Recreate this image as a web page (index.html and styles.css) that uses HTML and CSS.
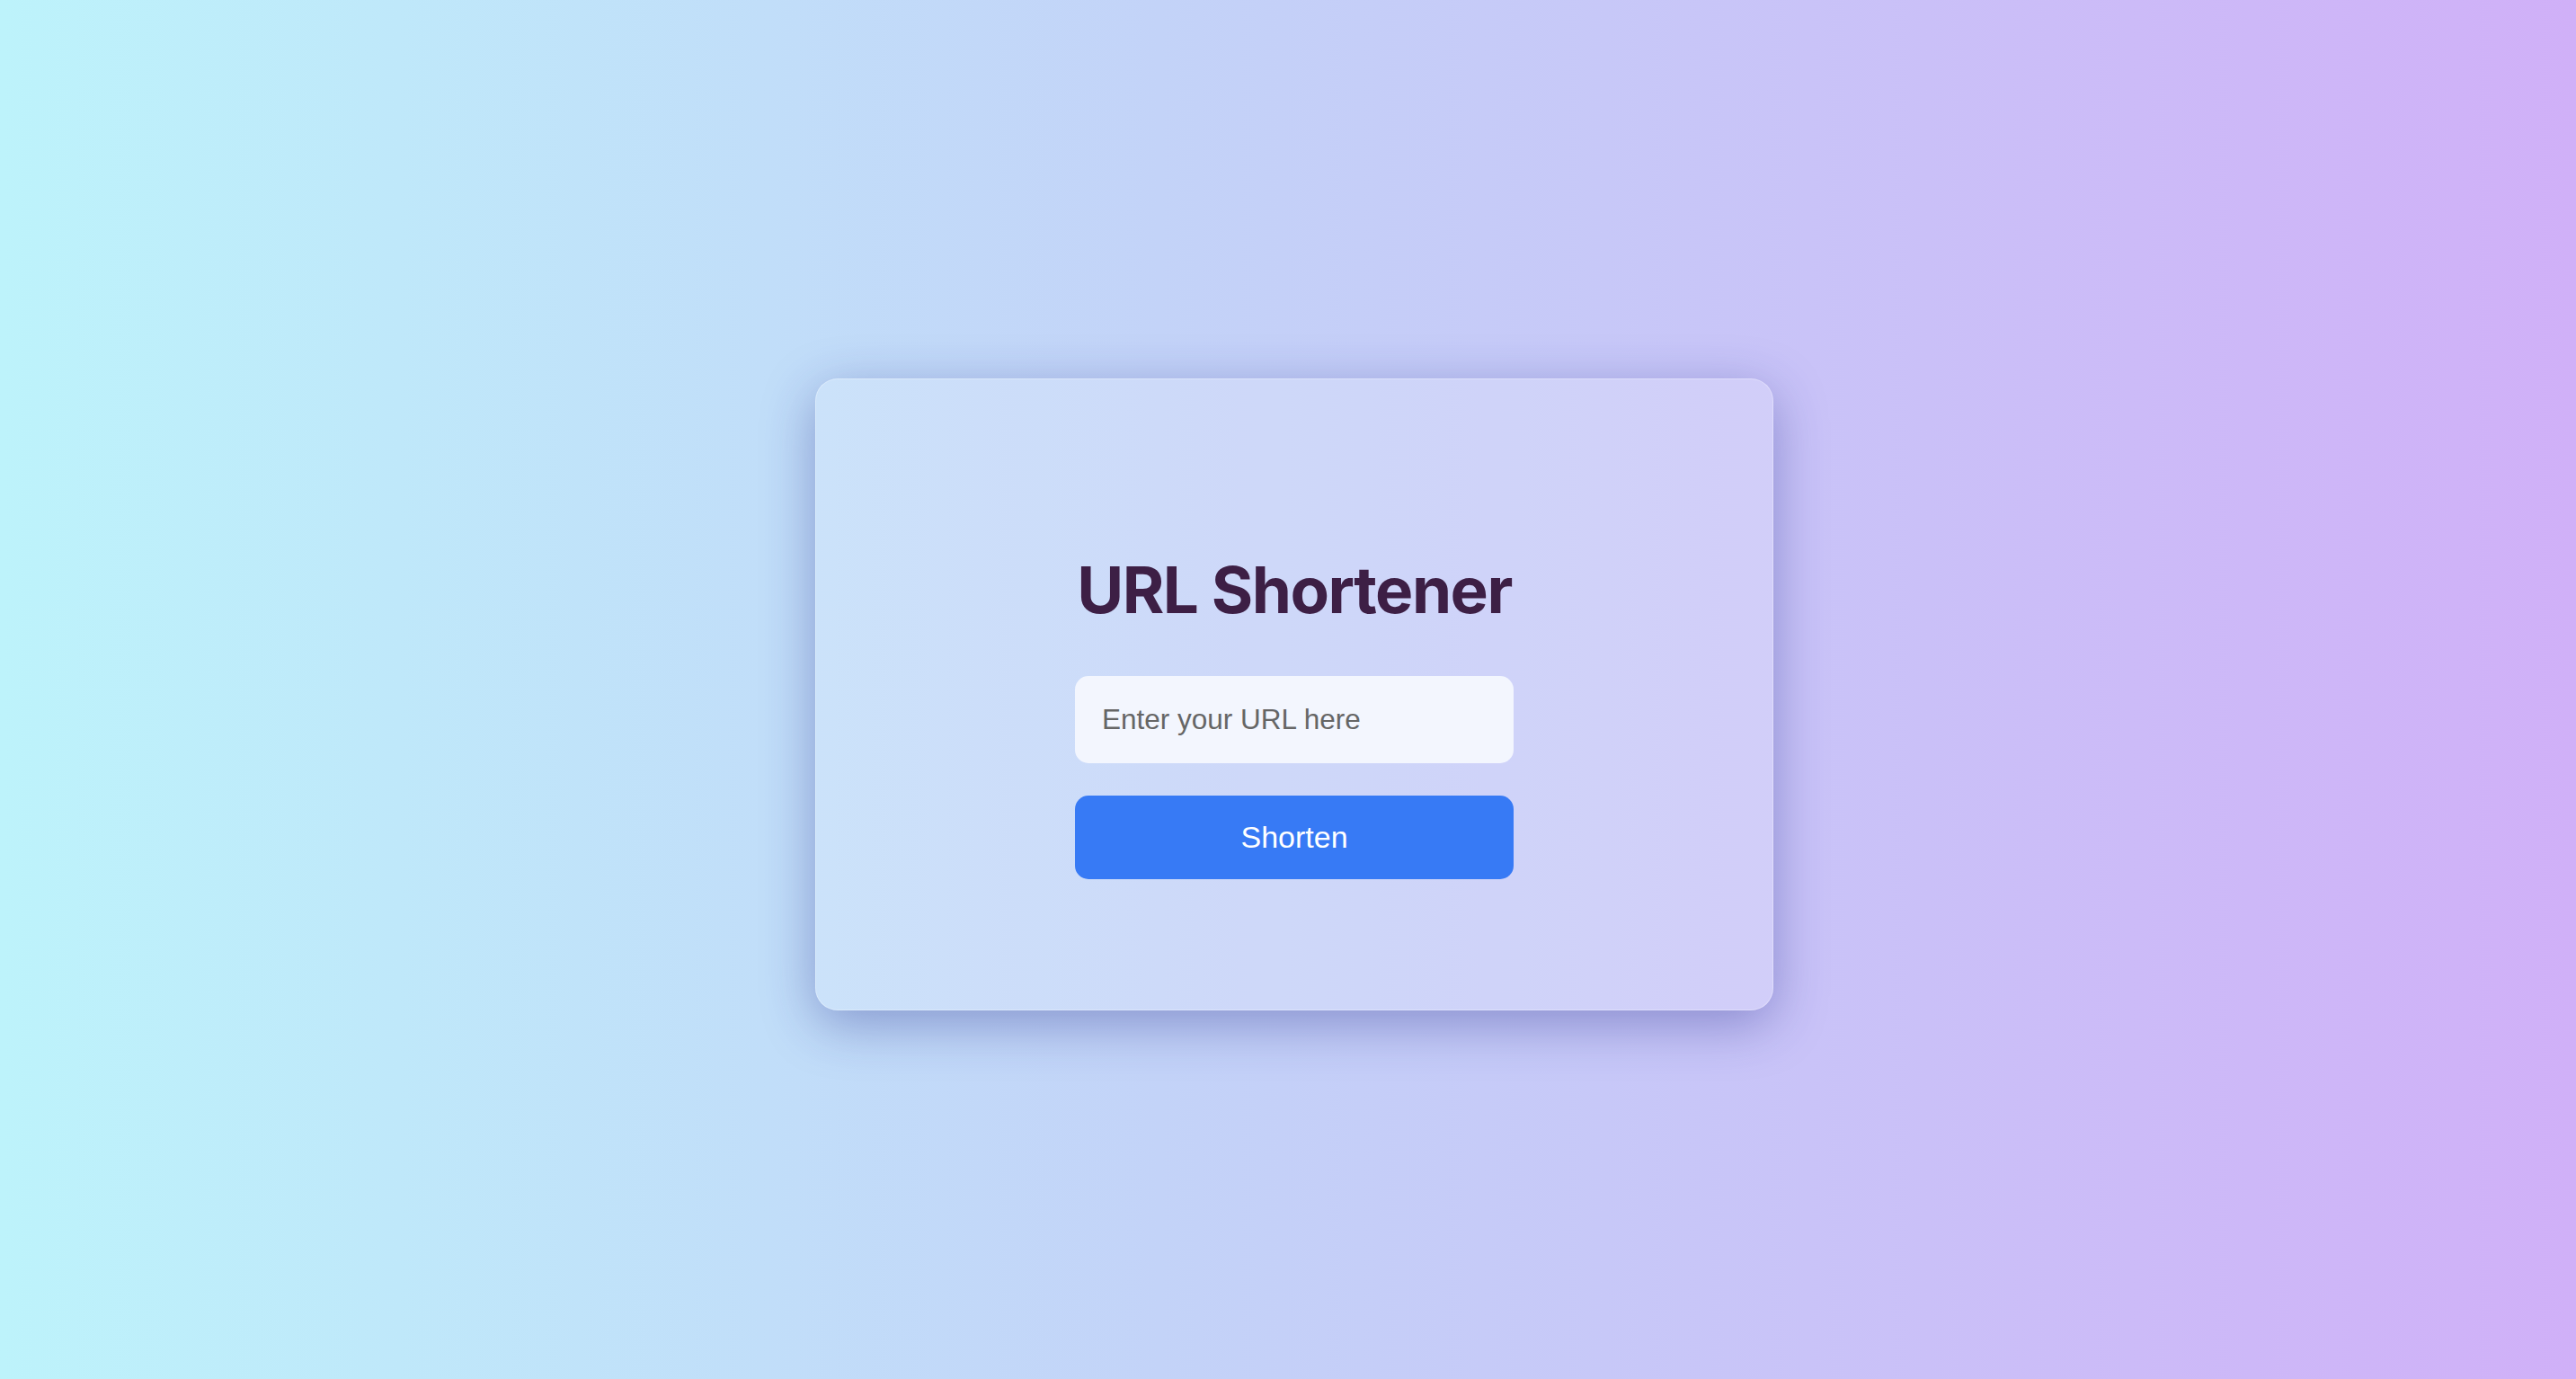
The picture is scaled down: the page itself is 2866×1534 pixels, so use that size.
FILE: index.html
```html
<!DOCTYPE html>
<html lang="en">
<head>
<meta charset="utf-8">
<title>URL Shortener</title>
<link rel="stylesheet" href="styles.css">
</head>
<body>
<main class="page">
  <section class="card">
    <h1 class="title">URL Shortener</h1>
    <input class="url-input" type="text" placeholder="Enter your URL here">
    <button class="btn" type="button">Shorten</button>
  </section>
</main>
</body>
</html>
```
FILE: styles.css
```css
html, body {
  margin: 0;
  padding: 0;
  height: 100%;
}
body {
  background: linear-gradient(to right, #bdf3fb 0%, #c3d3f8 45%, #d0b0f8 100%);
  font-family: "Liberation Sans", Arial, sans-serif;
}
.page {
  min-height: 100vh;
  box-sizing: border-box;
  display: flex;
  align-items: center;
  justify-content: center;
  padding-left: 14px;
  padding-top: 10px;
}
.card {
  width: 1066px;
  height: 703px;
  box-sizing: border-box;
  padding-top: 191px;
  display: flex;
  flex-direction: column;
  align-items: center;
  background: rgba(255, 255, 255, 0.17);
  border: 1px solid rgba(255, 255, 255, 0.3);
  border-radius: 25px;
  box-shadow: 0 15px 58px rgba(31, 38, 135, 0.37);
}
.title {
  margin: 0 0 52px;
  font-family: Inter, "Noto Sans", sans-serif;
  font-weight: 700;
  font-size: 71px;
  line-height: 87px;
  color: #3d1f45;
  letter-spacing: -1.5px;
}
.url-input {
  width: 488px;
  height: 97px;
  box-sizing: border-box;
  margin: 0 0 36px;
  padding: 0 30px;
  border: none;
  border-radius: 15px;
  background: #f3f6fe;
  font-family: "Liberation Sans", Arial, sans-serif;
  font-size: 31.5px;
  color: #333;
  outline: none;
}
.url-input::placeholder {
  color: #666;
}
.btn {
  width: 488px;
  height: 93px;
  border: none;
  border-radius: 15px;
  background: #377af5;
  color: #fff;
  font-family: "Liberation Sans", Arial, sans-serif;
  font-size: 34px;
  cursor: pointer;
}
```
